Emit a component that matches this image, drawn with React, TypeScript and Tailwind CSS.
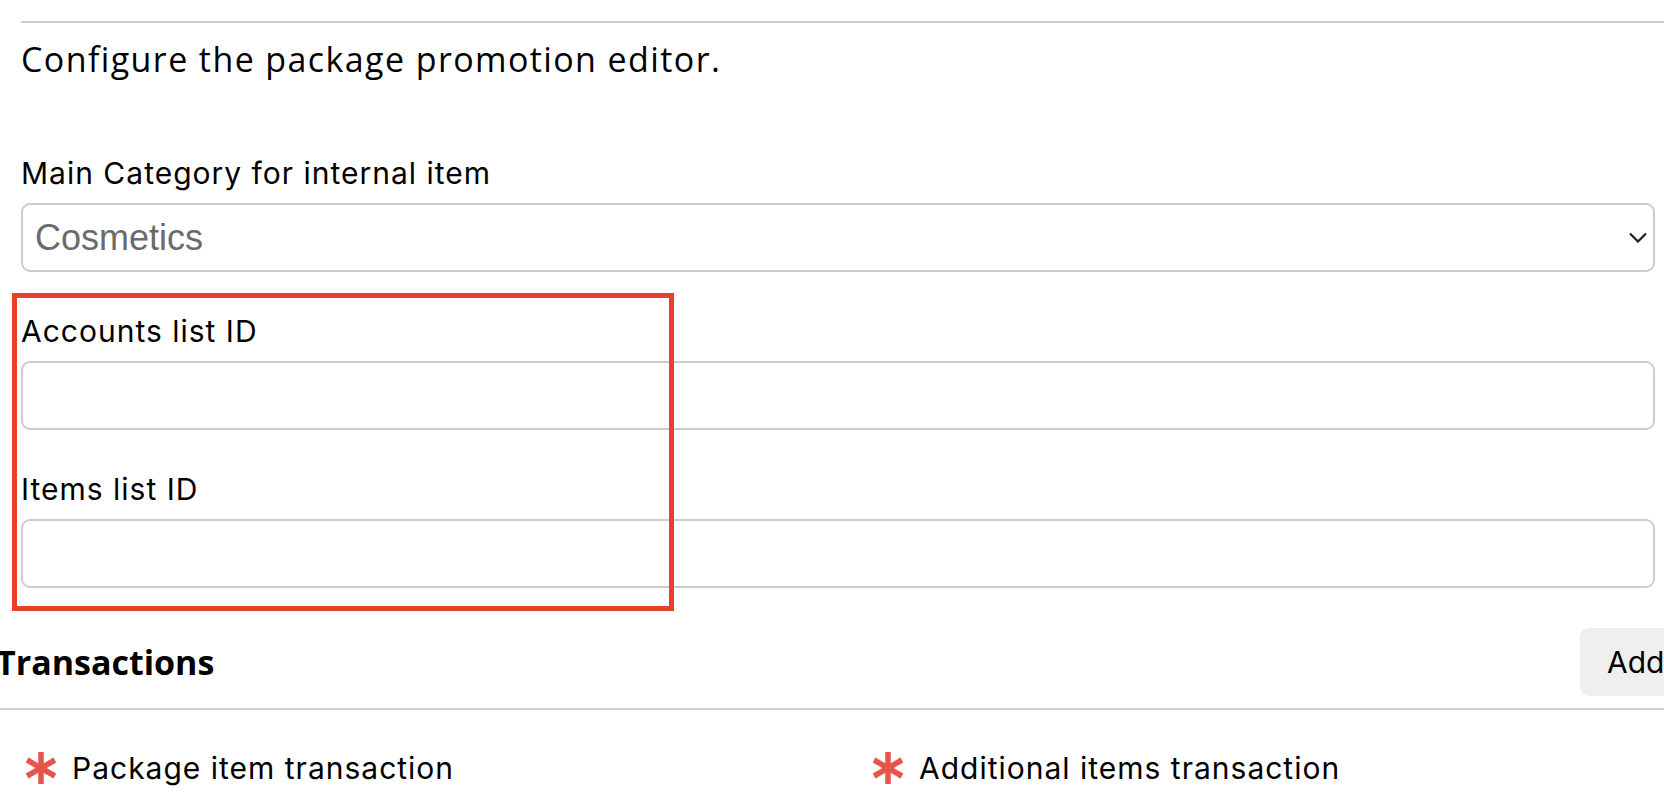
import React from "react";

function Asterisk() {
  return (
    <svg width="32" height="32" viewBox="0 0 32 32" className="shrink-0">
      <g stroke="#e5554b" strokeWidth="5.5" strokeLinecap="butt">
        <line x1="16" y1="0" x2="16" y2="32" />
        <line x1="2.1" y1="8" x2="29.9" y2="24" />
        <line x1="2.1" y1="24" x2="29.9" y2="8" />
      </g>
    </svg>
  );
}

function Field({ label, children }: { label: string; children: React.ReactNode }) {
  return (
    <div className="flex flex-col">
      <label className="font-['Inter'] text-[30px] leading-[36px] tracking-[1px] text-black">{label}</label>
      <div className="mt-[12px]">{children}</div>
    </div>
  );
}

export default function App() {
  return (
    <div className="relative w-[1664px] h-[796px] overflow-hidden bg-white text-black">
      <div className="ml-[21px] mt-[21px] border-t-2 border-[#cfcfcf]" />
      <div className="ml-[21px] w-[1634px] flex flex-col">
        <p className="mt-[12px] font-['Open_Sans'] text-[34px] leading-[48px] tracking-[1.4px]">
          Configure the package promotion editor.
        </p>
        <div className="mt-[72px] flex flex-col gap-[41px]">
          <Field label="Main Category for internal item">
            <div className="h-[69px] rounded-[9px] border-2 border-[#cccccc] flex items-center justify-between pl-[12px] pr-[6px]">
              <span className="font-['Liberation_Sans'] text-[36px] text-[#6b6b6b]">Cosmetics</span>
              <svg width="18" height="11" viewBox="0 0 18 11" fill="none">
                <path d="M1 1.5 L9 9.5 L17 1.5" stroke="#1f1f1f" strokeWidth="2.2" />
              </svg>
            </div>
          </Field>
          <Field label="Accounts list ID">
            <div className="h-[69px] rounded-[9px] border-2 border-[#cccccc]" />
          </Field>
          <Field label="Items list ID">
            <div className="h-[69px] rounded-[9px] border-2 border-[#cccccc]" />
          </Field>
        </div>
      </div>

      <div className="ml-[-4px] w-[1724px] mt-[40px] flex flex-col">
        <div className="flex items-center h-[68px]">
          <h2 className="flex-1 font-['Open_Sans'] font-bold text-[34px] leading-[42px]">Transactions</h2>
          <button className="w-[140px] h-[68px] rounded-[9px] bg-[#efefef] pl-[27px] text-left font-['Inter'] text-[30px] leading-[36px] text-black whitespace-nowrap">
            Add
          </button>
        </div>
        <div className="mt-[12px] border-t-2 border-[#cfcfcf]" />
        <div className="mt-[40px] pl-[29px] grid grid-cols-[847px_1fr]">
          <div className="flex items-center gap-[15px]">
            <Asterisk />
            <span className="font-['Inter'] text-[30px] leading-[36px] tracking-[1px]">Package item transaction</span>
          </div>
          <div className="flex items-center gap-[15px]">
            <Asterisk />
            <span className="font-['Inter'] text-[30px] leading-[36px] tracking-[1px]">Additional items transaction</span>
          </div>
        </div>
      </div>

      <div className="absolute left-[12px] top-[293px] w-[662px] h-[318px] border-[5px] border-[#e8412b] pointer-events-none" />
    </div>
  );
}
